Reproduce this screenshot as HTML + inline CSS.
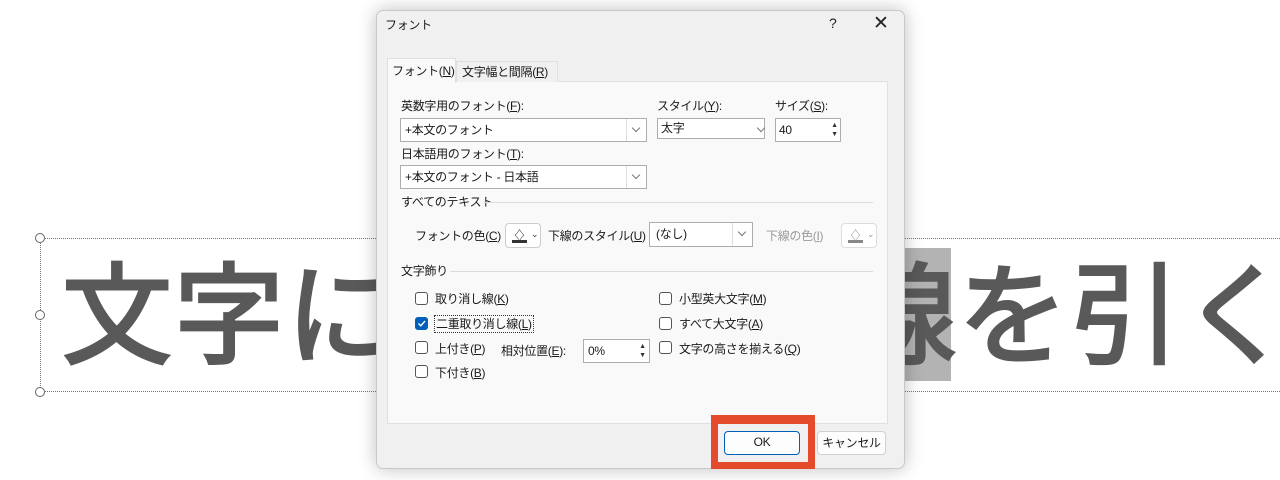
<!DOCTYPE html>
<html><head><meta charset="utf-8"><style>
*{margin:0;padding:0;box-sizing:border-box}
body{width:1280px;height:480px;background:#fff;position:relative;overflow:hidden;font-family:"Liberation Sans","Noto Sans CJK JP",sans-serif;}
.a{position:absolute;white-space:nowrap}
.big{font-family:"Noto Sans CJK JP",sans-serif;font-weight:400;font-size:110px;color:#595959;line-height:1;letter-spacing:2px;-webkit-text-stroke:3px #595959}
.t{font-size:12px;color:#1a1a1a;line-height:16px;letter-spacing:-0.3px}
.box{position:absolute;background:#fff;border:1px solid #adadad}
.dd{position:absolute;right:0;top:0;bottom:0;width:20px;border-left:1px solid #ddd;background:#fff}
.dd:after{content:"";position:absolute;left:6px;top:6px;width:5px;height:5px;border-right:1px solid #777;border-bottom:1px solid #777;transform:rotate(45deg)}
.cb{position:absolute;width:13px;height:13px;border:1px solid #555;border-radius:3px;background:#fff}
.line{position:absolute;height:1px;background:#dcdcdc}
u{text-decoration:underline}
.h{position:absolute;width:10px;height:10px;border:1.5px solid #666;border-radius:50%;background:#fff}
</style></head><body>
<div class="a" style="left:40px;top:238px;width:1250px;height:154px;border:1px dotted #777;border-right:none"></div>
<div class="h" style="left:35px;top:233px"></div>
<div class="h" style="left:35px;top:310px"></div>
<div class="h" style="left:35px;top:387px"></div>
<div class="a" style="left:851px;top:248px;width:100px;height:133px;background:#b3b3b3"></div>
<div class="a big" style="left:62px;top:252px">文字に取り消し線を引く</div>

<div class="a" style="left:376px;top:10px;width:529px;height:459px;background:#f0f0f0;border:1px solid #c8c8c8;border-radius:7px;box-shadow:0 0 18px rgba(0,0,0,.25)"></div>
<div class="a t" style="left:385px;top:17px;font-size:12px">フォント</div>
<div class="a" style="left:829px;top:15px;font-size:14px;color:#222">?</div>
<div class="a" style="left:873px;top:12px;font-size:19px;color:#222;font-weight:300">✕</div>

<div class="a" style="left:387px;top:81px;width:501px;height:343px;background:#f9f9f9;border:1px solid #e0e0e0"></div>
<div class="a t" style="left:387px;top:58px;width:69px;height:25px;background:#f9f9f9;border:1px solid #e0e0e0;border-bottom:none;padding:4px 0 0 4px">フォント(<u>N</u>)</div>
<div class="a t" style="left:456px;top:61px;width:102px;height:21px;background:#f0f0f0;border:1px solid #e0e0e0;border-bottom:none;padding:2px 0 0 5px">文字幅と間隔(<u>R</u>)</div>

<div class="a t" style="left:401px;top:98px">英数字用のフォント(<u>F</u>):</div>
<div class="box" style="left:400px;top:118px;width:247px;height:24px"><span class="a t" style="left:4px;top:3px">+本文のフォント</span><div class="dd"></div></div>
<div class="a t" style="left:657px;top:98px">スタイル(<u>Y</u>):</div>
<div class="box" style="left:657px;top:118px;width:108px;height:21px"><span class="a t" style="left:3px;top:1px">太字</span><div class="dd" style="width:12px;border:none"></div></div>
<div class="a t" style="left:775px;top:98px">サイズ(<u>S</u>):</div>
<div class="box" style="left:775px;top:118px;width:66px;height:24px"><span class="a t" style="left:3px;top:3px">40</span><span class="a" style="right:2px;top:2px;font-size:7px;line-height:9px;color:#333">▲<br>▼</span></div>
<div class="a t" style="left:401px;top:146px">日本語用のフォント(<u>T</u>):</div>
<div class="box" style="left:400px;top:165px;width:247px;height:24px"><span class="a t" style="left:4px;top:3px">+本文のフォント - 日本語</span><div class="dd"></div></div>

<div class="a t" style="left:401px;top:194px">すべてのテキスト</div>
<div class="line" style="left:484px;top:202px;width:389px"></div>
<div class="a t" style="left:415px;top:228px">フォントの色(<u>C</u>)</div>
<div class="box" style="left:505px;top:223px;width:36px;height:25px;border-radius:4px;border-color:#ccc"><span class="a" style="left:7px;top:1px;font-size:13px;color:#333">♢</span><div class="a" style="left:6px;top:16px;width:15px;height:3px;background:#333"></div><span class="a" style="left:25px;top:5px;font-size:9px;color:#333">⌄</span></div>
<div class="a t" style="left:548px;top:228px">下線のスタイル(<u>U</u>)</div>
<div class="box" style="left:649px;top:222px;width:104px;height:25px"><span class="a t" style="left:6px;top:3px">(なし)</span><div class="dd"></div></div>
<div class="a t" style="left:766px;top:228px;color:#9a9a9a">下線の色(<u>I</u>)</div>
<div class="box" style="left:841px;top:223px;width:36px;height:25px;border-radius:4px;border-color:#ddd"><span class="a" style="left:7px;top:1px;font-size:13px;color:#999">♢</span><div class="a" style="left:6px;top:16px;width:15px;height:3px;background:#888"></div><span class="a" style="left:25px;top:5px;font-size:9px;color:#999">⌄</span></div>

<div class="a t" style="left:401px;top:263px">文字飾り</div>
<div class="line" style="left:450px;top:271px;width:423px"></div>

<div class="cb" style="left:415px;top:292px"></div><div class="a t" style="left:435px;top:291px">取り消し線(<u>K</u>)</div>
<div class="cb" style="left:415px;top:317px;background:#005fb8;border-color:#005fb8"><svg width="11" height="11" style="position:absolute;left:0;top:0"><path d="M2.5 5.5 L4.8 7.8 L9 3" stroke="#fff" stroke-width="1.4" fill="none"/></svg></div>
<div class="a t" style="left:434px;top:315px;border:1px dotted #333;padding:0 1px">二重取り消し線(<u>L</u>)</div>
<div class="cb" style="left:415px;top:341px"></div><div class="a t" style="left:435px;top:341px">上付き(<u>P</u>)</div>
<div class="a t" style="left:501px;top:343px">相対位置(<u>E</u>):</div>
<div class="box" style="left:583px;top:339px;width:67px;height:24px"><span class="a t" style="left:4px;top:3px">0%</span><span class="a" style="right:3px;top:2px;font-size:7px;line-height:9px;color:#333">▲<br>▼</span></div>
<div class="cb" style="left:415px;top:365px"></div><div class="a t" style="left:435px;top:365px">下付き(<u>B</u>)</div>

<div class="cb" style="left:659px;top:292px"></div><div class="a t" style="left:679px;top:291px">小型英大文字(<u>M</u>)</div>
<div class="cb" style="left:659px;top:317px"></div><div class="a t" style="left:679px;top:316px">すべて大文字(<u>A</u>)</div>
<div class="cb" style="left:659px;top:341px"></div><div class="a t" style="left:679px;top:341px">文字の高さを揃える(<u>Q</u>)</div>

<div class="a" style="left:711px;top:415px;width:104px;height:54px;background:#e44a2c"></div>
<div class="a" style="left:718px;top:424px;width:90px;height:38px;background:#f0f0f0"></div>
<div class="a t" style="left:724px;top:431px;width:76px;height:24px;background:#fdfdfd;border:1.5px solid #005fb8;border-radius:4px;text-align:center;line-height:21px">OK</div>
<div class="a t" style="left:817px;top:431px;width:69px;height:24px;background:#fdfdfd;border:1px solid #d0d0d0;border-radius:4px;text-align:center;line-height:22px">キャンセル</div>
</body></html>
